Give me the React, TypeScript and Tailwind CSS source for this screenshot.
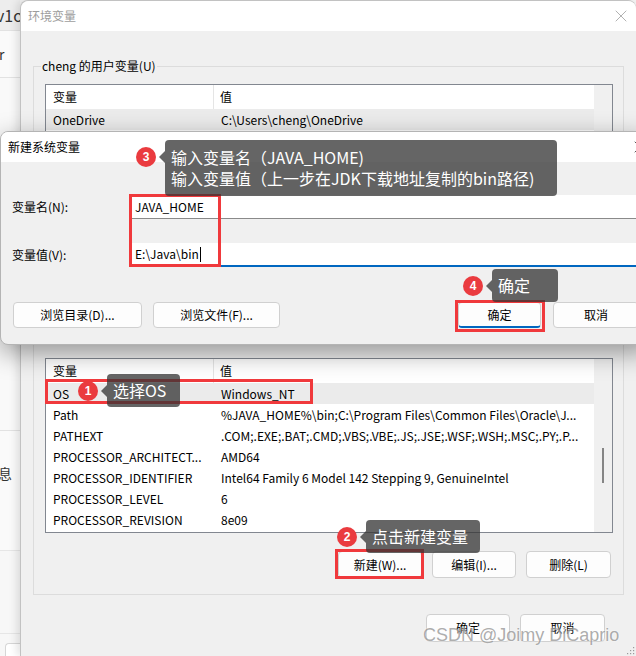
import { X } from "lucide-react";

const sysRows: string[][] = [
  ["OS", "Windows_NT"],
  ["Path", "%JAVA_HOME%\\bin;C:\\Program Files\\Common Files\\Oracle\\J..."],
  ["PATHEXT", ".COM;.EXE;.BAT;.CMD;.VBS;.VBE;.JS;.JSE;.WSF;.WSH;.MSC;.PY;.P..."],
  ["PROCESSOR_ARCHITECT...", "AMD64"],
  ["PROCESSOR_IDENTIFIER", "Intel64 Family 6 Model 142 Stepping 9, GenuineIntel"],
  ["PROCESSOR_LEVEL", "6"],
  ["PROCESSOR_REVISION", "8e09"],
];

const userRows: string[][] = [
  ["OneDrive", "C:\\Users\\cheng\\OneDrive"],
  ["Path", "C:\\Users\\cheng\\AppData\\Local\\Microsoft\\WindowsApps;"],
  ["TEMP", "C:\\Users\\cheng\\AppData\\Local\\Temp"],
  ["TMP", "C:\\Users\\cheng\\AppData\\Local\\Temp"],
];

function VarList({ items }: { items: string[][] }) {
  return (
    <div className="flex h-[175px] border border-[#828790] bg-white">
      <div className="min-w-0 flex-1">
        <div className="flex h-[24px] items-center">
          <div className="flex h-full w-[168px] items-center border-r border-[#e5e5e5] pl-[7px]">变量</div>
          <div className="pl-[6px]">值</div>
        </div>
        {items.map(([k, v], i) => (
          <div key={k} className={i === 0 ? "flex h-[21px] items-center bg-[#ebebeb]" : "flex h-[21px] items-center"}>
            <div className="w-[169px] shrink-0 overflow-hidden whitespace-nowrap pl-[7px]">{k}</div>
            <div className="min-w-0 overflow-hidden whitespace-nowrap pl-[6px]">{v}</div>
          </div>
        ))}
      </div>
      <div className="flex w-[18px] flex-col items-center bg-[#f0f0f0] pt-[89px]">
        <div className="h-[35px] w-[2px] bg-[#858585]" />
      </div>
    </div>
  );
}

function Btn({ children, w, accent }: { children: string; w: string; accent?: boolean }) {
  return (
    <div
      className={`flex h-full items-center justify-center rounded-[4px] border border-[#d0d0d0] bg-[#fdfdfd] ${w} ${
        accent ? "border-b-2 border-b-[#0067c0]" : ""
      }`}
    >
      {children}
    </div>
  );
}

function Badge({ n, pos }: { n: string; pos: string }) {
  return (
    <div
      className={`absolute flex h-[20px] w-[20px] items-center justify-center rounded-full bg-[#ea3b3f] font-['Liberation_Sans',sans-serif] text-[12px] font-bold text-white ${pos}`}
    >
      {n}
    </div>
  );
}

function Bubble({ pos, arrow, children }: { pos: string; arrow: string; children: React.ReactNode }) {
  return (
    <div className={`absolute rounded-[4px] bg-[rgba(52,52,52,0.76)] text-[16px] leading-[21px] text-white ${pos}`}>
      <div
        className={`absolute right-full h-0 w-0 border-y-[6px] border-r-[6px] border-y-transparent border-r-[rgba(52,52,52,0.76)] ${arrow}`}
      />
      {children}
    </div>
  );
}

export default function App() {
  return (
    <div className="relative flex h-[656px] w-[636px] overflow-hidden bg-[#f3f3f3] font-['Noto_Sans_CJK_SC',sans-serif] text-[12px] text-black">
      {/* app behind, left edge */}
      <div className="flex w-[20px] shrink-0 flex-col overflow-hidden">
        <div className="flex h-[30px] items-center whitespace-nowrap bg-[#ededed] text-[16px] text-[#333]">
          <span className="-ml-[4px]">v1o</span>
        </div>
        <div className="flex h-[47px] items-center border-t border-[#e2e2e2] bg-[#fafafa] text-[14px] text-[#333]">
          <span className="-ml-[1px]">r</span>
        </div>
        <div className="h-[353px] border-t border-[#e2e2e2] bg-[#f9f9f9]" />
        <div className="flex h-[120px] items-center border-t border-[#e2e2e2] bg-[#fafafa] pb-[35px] text-[14px] text-[#333]">
          <span className="-ml-[2px]">息</span>
        </div>
        <div className="h-[83px] border-t border-[#e6e6e6] bg-[#f7f7f7]" />
        <div className="flex-1 border-t border-[#e6e6e6] bg-[#f7f7f7] pl-[5px] pt-[9px]">
          <div className="h-full rounded-tl-[4px] border-l border-t border-[#d6d6d6] bg-white" />
        </div>
      </div>

      {/* 环境变量 dialog */}
      <div className="flex flex-1 flex-col rounded-t-[8px] border-l border-t border-[#c2c2c2] bg-[#f0f0f0] shadow-[-3px_0_8px_rgba(0,0,0,0.12)]">
        <div className="flex h-[30px] items-center justify-between rounded-t-[8px] bg-white pl-[7px] pr-[5px]">
          <span className="text-[#9d9d9d]">环境变量</span>
          <X size={20} strokeWidth={0.8} color="#8a8a8a" />
        </div>

        <div className="ml-[12px] mr-[12px] mt-[35px] border border-[#dcdcdc] px-[11px] pb-[16px] pr-[10px]">
          <div className="-ml-[4px] -mt-[9px] w-fit bg-[#f0f0f0] px-[1px] leading-[16px]">cheng 的用户变量(U)</div>
          <div className="mt-[10px]">
            <VarList items={userRows} />
          </div>
          <div className="mr-[2px] mt-[16px] flex h-[27px] justify-end gap-[10px]">
            <Btn w="w-[84px]">新建(N)...</Btn>
            <Btn w="w-[84px]">编辑(E)...</Btn>
            <Btn w="w-[85px]">删除(D)</Btn>
          </div>
        </div>

        <div className="ml-[12px] mr-[12px] mt-[17px] border border-[#dcdcdc] px-[11px] pb-[16px] pr-[10px]">
          <div className="-ml-[4px] -mt-[9px] w-fit bg-[#f0f0f0] px-[1px] leading-[16px]">系统变量(S)</div>
          <div className="mt-[14px]">
            <VarList items={sysRows} />
          </div>
          <div className="mr-[2px] mt-[18px] flex h-[27px] justify-end gap-[10px]">
            <Btn w="w-[84px]">新建(W)...</Btn>
            <Btn w="w-[84px]">编辑(I)...</Btn>
            <Btn w="w-[85px]">删除(L)</Btn>
          </div>
        </div>

        <div className="mt-[19px] flex h-[28px] justify-end gap-[10px] pr-[31px]">
          <Btn w="w-[84px]">确定</Btn>
          <Btn w="w-[85px]">取消</Btn>
        </div>
        <div className="flex flex-1 items-end justify-end pb-[1px] pr-[1px]">
          <svg width="8" height="8" viewBox="0 0 8 8">
            <rect x="6" y="0" width="1.2" height="1.2" fill="#9a9a9a" />
            <rect x="3" y="3" width="1.2" height="1.2" fill="#9a9a9a" />
            <rect x="6" y="3" width="1.2" height="1.2" fill="#9a9a9a" />
            <rect x="0" y="6" width="1.2" height="1.2" fill="#9a9a9a" />
            <rect x="3" y="6" width="1.2" height="1.2" fill="#9a9a9a" />
            <rect x="6" y="6" width="1.2" height="1.2" fill="#9a9a9a" />
          </svg>
        </div>
      </div>

      {/* 新建系统变量 dialog on top */}
      <div className="absolute left-0 top-[131px] flex h-[214px] w-[652px] flex-col overflow-hidden rounded-[8px] border border-[#b4b4b4] bg-[#f0f0f0] shadow-[0_8px_26px_rgba(0,0,0,0.38)]">
        <div className="flex h-[30px] shrink-0 items-center justify-between bg-white pl-[7px] pr-[1px]">
          <span>新建系统变量</span>
          <X size={20} strokeWidth={0.9} color="#222" />
        </div>
        <div className="flex flex-col pt-[33px]">
          <div className="flex h-[24px] items-center">
            <div className="w-[129px] pl-[11px]">变量名(N):</div>
            <div className="mr-[12px] flex h-full flex-1 items-center border-b border-[#8a8a8a] bg-white pl-[5px]">JAVA_HOME</div>
          </div>
          <div className="mt-[24px] flex h-[24px] items-center">
            <div className="w-[129px] pl-[11px]">变量值(V):</div>
            <div className="mr-[12px] flex h-full flex-1 items-center border-b-2 border-[#0067c0] bg-white pl-[5px]">
              E:\Java\bin
              <span className="ml-[1px] h-[15px] w-[1px] bg-black" />
            </div>
          </div>
          <div className="mt-[35px] flex h-[26px] pl-[12px] pr-[12px]">
            <Btn w="w-[129px]">浏览目录(D)...</Btn>
            <div className="ml-[11px] h-full">
              <Btn w="w-[127px]">浏览文件(F)...</Btn>
            </div>
            <div className="ml-auto h-full">
              <Btn w="w-[83px]" accent>
                确定
              </Btn>
            </div>
            <div className="ml-[12px] h-full">
              <Btn w="w-[86px]">取消</Btn>
            </div>
          </div>
        </div>
      </div>

      {/* annotation marks */}
      <div className="absolute left-[129px] top-[194px] h-[73px] w-[92px] border-[3px] border-[#f0393c]" />
      <div className="absolute left-[455px] top-[300px] h-[32px] w-[90px] border-[3px] border-[#f0393c]" />
      <div className="absolute left-[45px] top-[379px] h-[25px] w-[268px] border-[3px] border-[#f0393c]" />
      <div className="absolute left-[335px] top-[549px] h-[30px] w-[89px] border-[3px] border-[#f0393c]" />

      <Badge n="3" pos="left-[136px] top-[147px]" />
      <Bubble pos="left-[165px] top-[140px] h-[56px] w-[392px] pl-[6px] pt-[7px]" arrow="top-[11px]">
        <div>输入变量名（JAVA_HOME)</div>
        <div>输入变量值（上一步在JDK下载地址复制的bin路径)</div>
      </Bubble>

      <Badge n="4" pos="left-[463px] top-[276px]" />
      <Bubble pos="left-[492px] top-[269px] h-[33px] w-[66px] pl-[6px] pt-[6px]" arrow="top-[11px]">
        确定
      </Bubble>

      <Badge n="1" pos="left-[78px] top-[381px]" />
      <Bubble pos="left-[107px] top-[374px] h-[33px] w-[73px] pl-[6px] pt-[6px]" arrow="top-[11px]">
        选择OS
      </Bubble>

      <Badge n="2" pos="left-[337px] top-[527px]" />
      <Bubble pos="left-[366px] top-[520px] h-[33px] w-[114px] pl-[6px] pt-[6px]" arrow="top-[11px]">
        点击新建变量
      </Bubble>

      <div className="absolute left-[423px] top-[624px] whitespace-nowrap font-['Liberation_Sans',sans-serif] text-[18px] leading-[22px] text-[rgba(120,120,120,0.62)] [text-shadow:0_0_2px_rgba(255,255,255,0.9)]">
        CSDN @Joimy DiCaprio
      </div>
    </div>
  );
}
